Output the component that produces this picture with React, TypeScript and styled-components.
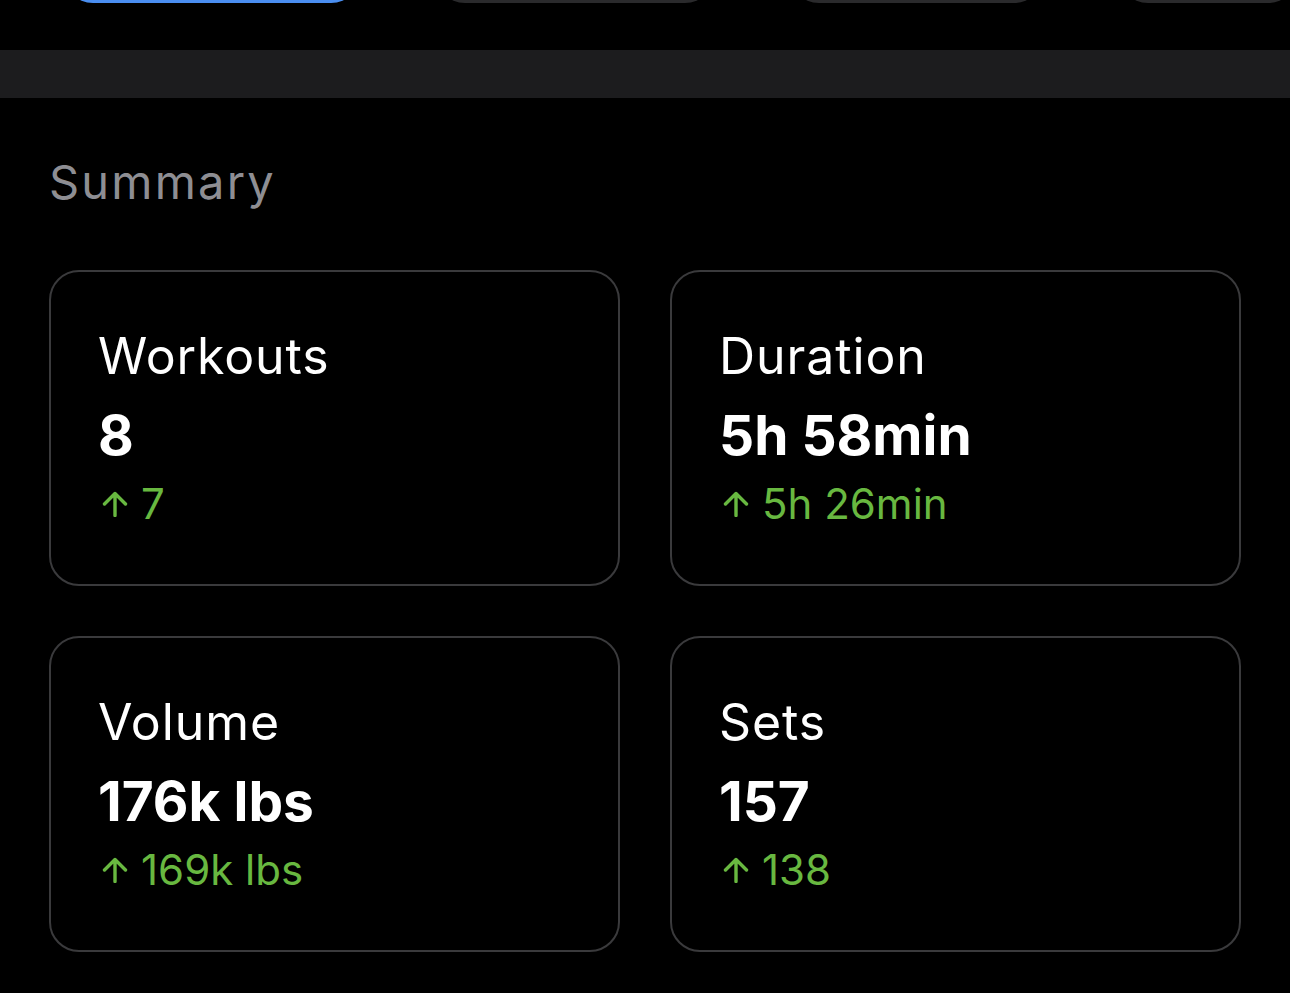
import styled, { createGlobalStyle } from 'styled-components';

const GlobalStyle = createGlobalStyle`
  html, body {
    margin: 0;
    padding: 0;
    background: #000000;
  }
  body {
    font-family: Inter, "Open Sans", sans-serif;
    color: #ffffff;
  }
`;

const Page = styled.div`
  width: 1290px;
  min-height: 993px;
  background: #000000;
  overflow: hidden;
`;

const TabStrip = styled.div`
  display: flex;
  height: 50px;
  overflow: hidden;
  padding-left: 63px;
  gap: 74px;
`;

const Tab = styled.div<{ active?: boolean; width: number }>`
  flex: none;
  width: ${(props) => props.width}px;
  height: 60px;
  margin-top: -57px;
  border-radius: 30px;
  background: ${(props) => (props.active ? '#4a8ef0' : '#2a2a2c')};
`;

const Band = styled.div`
  height: 48px;
  background: #1c1c1e;
`;

const Section = styled.section`
  padding: 56px 49px 0;
`;

const Title = styled.h2`
  margin: 0;
  font-size: 47px;
  line-height: 56px;
  font-weight: 400;
  letter-spacing: 2.2px;
  color: #8e8e93;
`;

const Grid = styled.div`
  display: grid;
  grid-template-columns: 571px 571px;
  gap: 50px;
  margin-top: 60px;
`;

const Card = styled.div`
  height: 316px;
  box-sizing: border-box;
  border: 2px solid #3a3a3c;
  border-radius: 30px;
  padding: 54px 47px 0;
`;

const Label = styled.div`
  font-size: 50px;
  line-height: 60px;
  font-weight: 400;
  letter-spacing: 0.9px;
  color: #ffffff;
`;

const Value = styled.div`
  margin-top: 17px;
  font-size: 55px;
  line-height: 64px;
  font-weight: 700;
  color: #ffffff;
`;

const Delta = styled.div`
  margin-top: 10px;
  padding-left: 4px;
  display: flex;
  align-items: center;
  gap: 13px;
  font-size: 42px;
  line-height: 54px;
  font-weight: 400;
  color: #68b840;
`;

const UpArrow = () => (
  <svg width="26" height="26" viewBox="0 0 26 26" fill="none">
    <path
      d="M13 24.5V2.5M2.5 13L13 2.5L23.5 13"
      stroke="#68b840"
      strokeWidth="3.4"
      strokeLinecap="round"
      strokeLinejoin="round"
    />
  </svg>
);

const stats = [
  { label: 'Workouts', value: '8', delta: '7' },
  { label: 'Duration', value: '5h 58min', delta: '5h 26min' },
  { label: 'Volume', value: '176k lbs', delta: '169k lbs' },
  { label: 'Sets', value: '157', delta: '138' },
];

const tabs = [
  { width: 298, active: true },
  { width: 280 },
  { width: 255 },
  { width: 180 },
];

export default function App() {
  return (
    <Page>
      <GlobalStyle />
      <TabStrip>
        {tabs.map((tab, index) => (
          <Tab key={index} width={tab.width} active={tab.active} />
        ))}
      </TabStrip>
      <Band />
      <Section>
        <Title>Summary</Title>
        <Grid>
          {stats.map((stat) => (
            <Card key={stat.label}>
              <Label>{stat.label}</Label>
              <Value>{stat.value}</Value>
              <Delta>
                <UpArrow />
                {stat.delta}
              </Delta>
            </Card>
          ))}
        </Grid>
      </Section>
    </Page>
  );
}
